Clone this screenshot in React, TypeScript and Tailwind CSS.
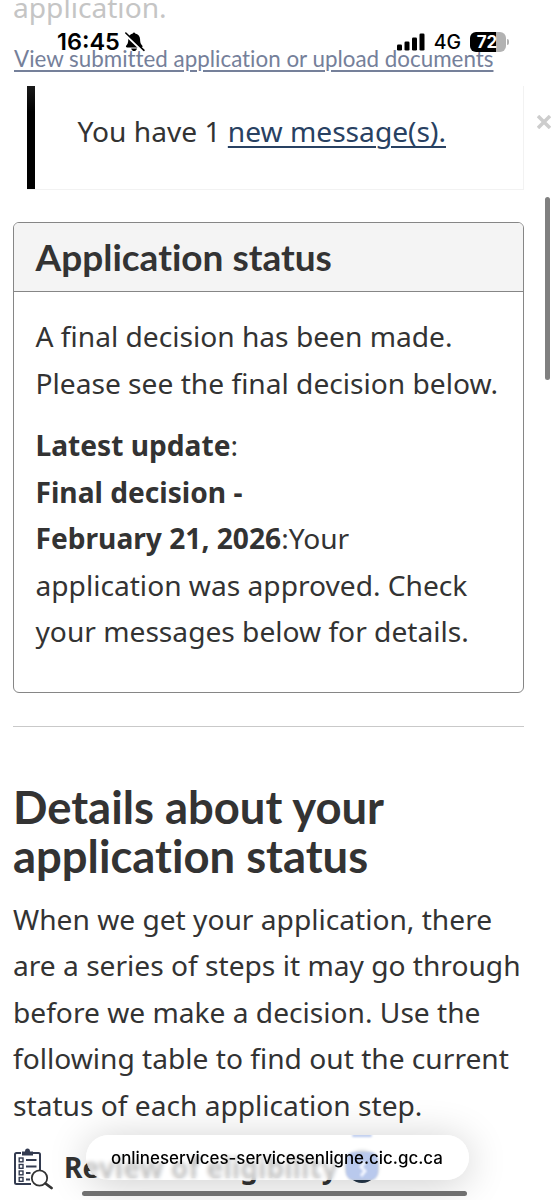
function BellOff() {
  return (
    <svg viewBox="0 0 22 22" className="h-[22px] w-[22px]">
      <path d="M10 1.500c.6 0 1 .4 1.200 1 3 .6 4.800 2.800 4.900 6 .1 3.800 1 4.800 2.100 6 .8.9.3 2-.9 2H3.200c-1.200 0-1.700-1.100-.9-2C3.400 13.300 4.200 12.300 4.300 8.500c.1-3.200 1.700-5.400 4.500-6 .2-.6.600-1 1.200-1zM7.200 17.500h5.800c-.2 1.500-1.500 2.600-2.900 2.600s-2.700-1.100-2.900-2.600z" fill="#000" />
      <path d="M1.200 3.300 19 20.300" stroke="#fff" strokeWidth="2.400" />
      <path d="M1.800 2 20 19.300" stroke="#000" strokeWidth="1.600" strokeLinecap="round" />
    </svg>
  );
}

function Signal() {
  return (
    <svg viewBox="0 0 28 18" className="h-[18px] w-[28px]">
      <rect x="0" y="11.500" width="5" height="6" rx="1.300" />
      <rect x="7.500" y="8.500" width="5" height="9" rx="1.300" />
      <rect x="15" y="4.500" width="5" height="13" rx="1.300" />
      <rect x="22.500" y="0.500" width="5" height="17" rx="1.300" />
    </svg>
  );
}

function Checklist() {
  return (
    <svg viewBox="0 0 40 42" className="h-[42px] w-[40px] shrink-0" fill="none" stroke="#333b50" strokeWidth="2">
      <path d="M8 5H3.500Q2 5 2 6.500V34.500Q2 36 3.500 36H18M20 5h5.500Q27 5 27 6.500V22" />
      <path d="M9 7.500V3.500h3q0-3 2.500-3T17 3.500h3v4z" fill="#333b50" stroke="none" />
      <g strokeWidth="1.400">
        <rect x="6.200" y="10" width="3.800" height="3.800" />
        <rect x="6.200" y="16.500" width="3.800" height="3.800" />
        <rect x="6.200" y="23" width="3.800" height="3.800" />
        <rect x="6.200" y="29.500" width="3.800" height="3.800" />
        <path d="M13 12H23.500M13 18.500H23.500M13 25H17.500M13 31.500H17" strokeWidth="1.800" />
      </g>
      <circle cx="26.500" cy="30" r="7.700" fill="#fff" stroke="#333" strokeWidth="1.800" />
      <path d="m32.500 35.500 6 4.500" stroke="#333" strokeWidth="2.800" strokeLinecap="round" />
    </svg>
  );
}

export default function App() {
  return (
    <div className="relative h-[1200px] w-[554px] overflow-hidden bg-white font-['Noto_Sans',sans-serif] text-[28.150px] leading-[46.550px] text-[#333]">
      <main className="flex flex-col pl-[13px] pr-[30px]">
        <p className="-mt-[16px] h-[46px] whitespace-nowrap text-[#c5c5c5]">application.</p>
        <a className="mt-[11px] h-[36px] whitespace-nowrap pl-px font-['Lato',sans-serif] text-[22.380px] leading-[36px] text-[#75809a] underline decoration-[1.500px] underline-offset-[3px] [font-variant-ligatures:none]">
          View submitted application or upload documents
        </a>

        <section className="ml-[14px] mt-[9px] flex h-[104px] border-b border-r border-[#f2f2f2] bg-[linear-gradient(#1a1a1a,#000_25%)] bg-[length:8px_100%] bg-no-repeat pl-[50.500px] pt-[22px]">
          <p className="whitespace-nowrap">
            You have 1 <a className="text-[#284162] underline decoration-[1.500px] underline-offset-[4px]">new message(s).</a>
          </p>
        </section>

        <section className="mt-[32px] h-[471px] rounded-[6px] border border-[#868686]">
          <h3 className="h-[69px] rounded-t-[5px] border-b border-[#868686] bg-[#f4f4f4] pl-[21.500px] pt-[12px] font-['Lato',sans-serif] text-[37px] font-bold leading-[44px] [font-variant-ligatures:none]">
            Application status
          </h3>
          <div className="whitespace-nowrap pl-[21.500px] pt-[21px]">
            <p>A final decision has been made.<br />Please see the final decision below.</p>
            <p className="mt-[16px]">
              <b>Latest update</b>:<br />
              <b>Final decision -</b><br />
              <b>February 21, 2026</b>:Your<br />
              application was approved. Check<br />
              your messages below for details.
            </p>
          </div>
        </section>

        <hr className="mt-[33px] border-[#c9c9c9]" />

        <h2 className="mt-[55px] whitespace-nowrap font-['Lato',sans-serif] text-[45.400px] font-bold leading-[49px] [font-variant-ligatures:none]">
          Details about your<br />application status
        </h2>
        <p className="mt-[15.500px] whitespace-nowrap">
          When we get your application, there<br />
          are a series of steps it may go through<br />
          before we make a decision. Use the<br />
          following table to find out the current<br />
          status of each application step.
        </p>
        <div className="mt-[19.500px] flex h-[46px] items-start">
          <Checklist />
          <b className="ml-[11px] whitespace-nowrap leading-[38px]">Review of eligibility</b>
          <span className="ml-[8px] mt-[3px] h-[32px] w-[32px] shrink-0 rounded-full bg-[#26374a]" />
        </div>
      </main>

      <header className="absolute left-[57px] right-[44px] top-[30px] flex h-[24px] items-center font-['Inter',sans-serif] leading-[24px] text-black">
        <time className="text-[23.500px] font-semibold">16:45</time>
        <span className="ml-[4px]"><BellOff /></span>
        <span className="ml-auto"><Signal /></span>
        <span className="ml-[9px] text-[19.500px] font-medium">4G</span>
        <span className="ml-[9px] h-[20px] w-[36px] rounded-[6px] bg-[linear-gradient(90deg,#000_72%,#b2b2b2_72%)] pr-[2px] text-center text-[17px] font-bold leading-[20px] text-white">72</span>
        <span className="ml-[1px] mr-[1px] h-[6px] w-[2px] rounded-r bg-[#b2b2b2]" />
      </header>

      <svg viewBox="0 0 14 14" className="absolute left-[537px] top-[115px] h-[14px] w-[14px]" stroke="#cdcdcd" strokeWidth="3.500">
        <path d="m1 1 12 12M13 1 1 13" />
      </svg>
      <div className="absolute left-[545px] top-[197px] h-[183px] w-[5px] rounded-full bg-[#808080]" />

      <div className="absolute left-[86px] top-[1135px] h-[45px] w-[383px] overflow-hidden rounded-full bg-white/70 shadow-[0_4px_40px_rgba(0,0,0,0.200)] backdrop-blur-[2px]">
        <span className="absolute left-[260px] top-[17px] h-[28px] w-[32px] rounded-[8px] bg-[#b9c9ed] blur-[1px]" />
        <span className="absolute left-[266px] top-[-1px] h-[3px] w-[20px] rounded-full bg-[#b9c9ed] blur-[1px]" />
        <svg viewBox="0 0 12 16" className="absolute left-[271px] top-[26px] h-[16px] w-[12px] blur-[1px]" fill="none" stroke="#f4f7ff" strokeWidth="3">
          <path d="M8 1 4 6l4 4-4 5" />
        </svg>
        <p className="relative whitespace-nowrap pl-[25px] font-['Inter',sans-serif] text-[16.900px] font-medium leading-[46px] text-black">
          onlineservices-servicesenligne.cic.gc.ca
        </p>
      </div>
      <div className="absolute left-[82px] top-[1191px] h-[5px] w-[385px] rounded-full bg-[#707070]" />
    </div>
  );
}
